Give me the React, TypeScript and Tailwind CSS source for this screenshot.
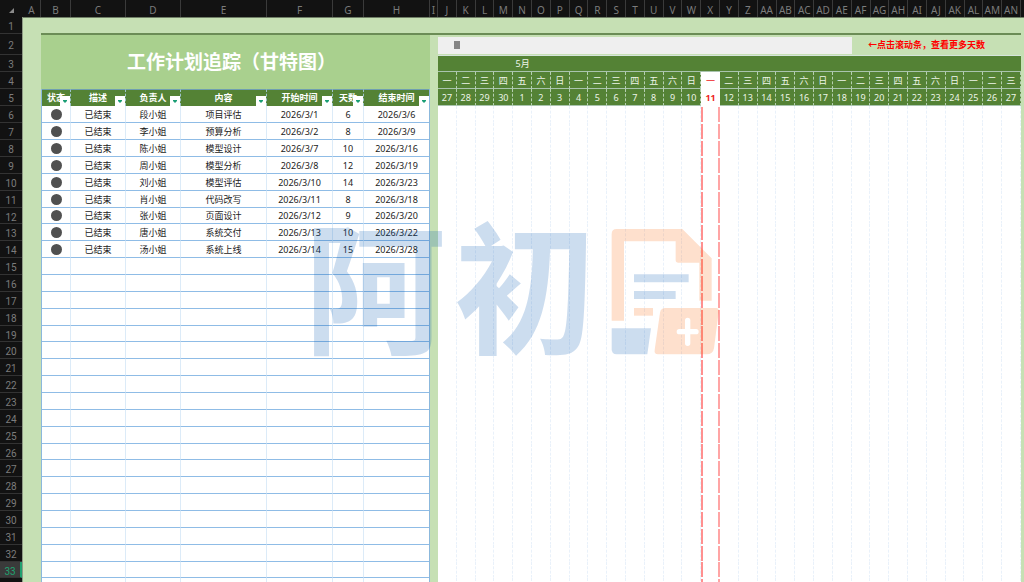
import { useState } from 'react';

interface Task {
  status: string;
  owner: string;
  content: string;
  start: string;
  days: number;
  end: string;
}

const tasks: Task[] = [
  { status: '已结束', owner: '段小姐', content: '项目评估', start: '2026/3/1', days: 6, end: '2026/3/6' },
  { status: '已结束', owner: '李小姐', content: '预算分析', start: '2026/3/2', days: 8, end: '2026/3/9' },
  { status: '已结束', owner: '陈小姐', content: '模型设计', start: '2026/3/7', days: 10, end: '2026/3/16' },
  { status: '已结束', owner: '周小姐', content: '模型分析', start: '2026/3/8', days: 12, end: '2026/3/19' },
  { status: '已结束', owner: '刘小姐', content: '模型评估', start: '2026/3/10', days: 14, end: '2026/3/23' },
  { status: '已结束', owner: '肖小姐', content: '代码改写', start: '2026/3/11', days: 8, end: '2026/3/18' },
  { status: '已结束', owner: '张小姐', content: '页面设计', start: '2026/3/12', days: 9, end: '2026/3/20' },
  { status: '已结束', owner: '唐小姐', content: '系统交付', start: '2026/3/13', days: 10, end: '2026/3/22' },
  { status: '已结束', owner: '汤小姐', content: '系统上线', start: '2026/3/14', days: 15, end: '2026/3/28' },
];

// Sheet columns of the task table (B to H), cell widths exclude the outer border
const taskColumns = [
  { letter: 'B', label: '状态', width: 'w-[30px]', cell: 'w-[29px]' },
  { letter: 'C', label: '描述', width: 'w-[55px]', cell: 'w-[55px]' },
  { letter: 'D', label: '负责人', width: 'w-[55px]', cell: 'w-[55px]' },
  { letter: 'E', label: '内容', width: 'w-[86px]', cell: 'w-[86px]' },
  { letter: 'F', label: '开始时间', width: 'w-[66px]', cell: 'w-[66px]' },
  { letter: 'G', label: '天数', width: 'w-[31px]', cell: 'w-[31px]' },
  { letter: 'H', label: '结束时间', width: 'w-[66px]', cell: 'w-[65px]' },
];

const ganttLetters = [
  ...'JKLMNOPQRSTUVWXYZ'.split(''),
  ...'ABCDEFGHIJKLMN'.split('').map((l) => `A${l}`),
];

const weekNames = ['一', '二', '三', '四', '五', '六', '日'];

// 31 days from Monday 27 April
const days = ganttLetters.map((letter, i) => ({
  letter,
  week: weekNames[i % 7],
  date: i < 4 ? 27 + i : i - 3,
  isToday: i === 14,
}));

const FIRST_ROW = 6;
const ACTIVE_ROW = 33;
const bodyRows = Array.from({ length: 30 }, (_, i) => i);

// Every seventh row is one pixel shorter
const rowHeight = (i: number) => (i % 7 === 6 ? 'h-4' : 'h-[17px]');

const gutterHeight = (row: number) => {
  if (row === 2) return 'h-[21px]';
  return row < FIRST_ROW ? 'h-[17px]' : rowHeight(row - FIRST_ROW);
};

function ColumnHeader() {
  const cell = 'flex items-center justify-center border-r border-[#3a3a3a] pt-0.5';
  return (
    <div className="flex h-[17px] shrink-0 bg-[#121212] font-['Noto_Sans',sans-serif] text-[10px] leading-none text-[#7c7c7c]">
      <div className="flex w-[23px] shrink-0 items-center justify-center pt-1">
        <svg width="5" height="5" viewBox="0 0 5 5" aria-hidden="true">
          <path d="M5 0V5H0Z" fill="#8a8a8a" />
        </svg>
      </div>
      <div className={`${cell} w-[18px] shrink-0`}>A</div>
      {taskColumns.map((c) => (
        <div key={c.letter} className={`${cell} ${c.width} shrink-0`}>{c.letter}</div>
      ))}
      <div className={`${cell} w-2 shrink-0`}>I</div>
      <div className="grid flex-1 grid-cols-[repeat(31,minmax(0,1fr))]">
        {ganttLetters.map((l) => (
          <div key={l} className={cell}>{l}</div>
        ))}
      </div>
      <div className="w-[3px] shrink-0" />
    </div>
  );
}

function RowGutter() {
  return (
    <div className="w-[23px] shrink-0 border-r border-[#8f9b86] bg-[#121212] font-[Roboto,'Noto_Sans',sans-serif] text-[10px] leading-none">
      {Array.from({ length: ACTIVE_ROW }, (_, i) => i + 1).map((row) => (
        <div
          key={row}
          className={`flex items-center justify-center border-b border-[#333333] pt-1 ${gutterHeight(row)} ${
            row === ACTIVE_ROW ? 'border-r-2 border-r-[#21a070] bg-[#3a3a3a] text-[#1fa271]' : 'text-[#7c7c7c]'
          }`}
        >
          {row}
        </div>
      ))}
    </div>
  );
}

function TaskTable() {
  return (
    <table className="w-full table-fixed border-separate border-spacing-0 border-x border-[#8bb8dc] bg-white text-center text-[9px] leading-none text-[#222222]">
      <thead>
        <tr className="h-[17px] bg-[#548235] text-white">
          {taskColumns.map((c) => (
            <th
              key={c.letter}
              className={`relative border-t border-r border-t-[#6f9fb0] border-r-[#9dc3c8] p-0 pb-0.5 font-bold [border-right-style:dashed] last:border-r-0 ${c.cell}`}
            >
              {c.label}
              <button
                type="button"
                aria-label={`筛选${c.label}`}
                className="absolute right-0 bottom-0 flex size-[10px] items-center justify-center bg-white"
              >
                <svg width="4" height="3" viewBox="0 0 4 3" aria-hidden="true">
                  <path d="M0 0H4V1L2 3L0 1Z" fill="#1a9e75" />
                </svg>
              </button>
            </th>
          ))}
        </tr>
      </thead>
      <tbody>
        {bodyRows.map((i) => {
          const task = tasks[i];
          const cells = task
            ? [task.status, task.owner, task.content, task.start, task.days, task.end]
            : ['', '', '', '', '', ''];
          return (
            <tr key={i} className={rowHeight(i)}>
              <td className="border-r border-b border-r-[#dcebf8] border-b-[#8fbce6] p-0">
                {task && <span className="mx-auto block size-[11px] rounded-full bg-[#505050]" />}
              </td>
              {cells.map((value, n) => (
                <td
                  key={n}
                  className="border-r border-b border-r-[#dcebf8] border-b-[#8fbce6] p-0 last:border-r-0"
                >
                  {value}
                </td>
              ))}
            </tr>
          );
        })}
      </tbody>
    </table>
  );
}

function GanttTable() {
  const head = 'border-b border-b-[#a9c4ae] p-0 font-normal';
  return (
    <table className="w-full table-fixed border-separate border-spacing-0 bg-white text-center text-[9px] leading-none text-[#eef5e8]">
      <thead className="bg-[#548235]">
        <tr className="h-[17px]">
          <th colSpan={4} className={`${head} border-t border-t-[#d5e5dc]`} />
          <th className={`${head} border-t border-t-[#d5e5dc]`}>5月</th>
          <th colSpan={26} className={`${head} border-t border-t-[#d5e5dc]`} />
        </tr>
        <tr className="h-[17px]">
          {days.map((d) => (
            <th
              key={d.letter}
              className={
                d.isToday
                  ? 'border-b border-white bg-white p-0 font-normal text-[#ee2222]'
                  : `${head} border-r border-r-[#b5cfb0] [border-right-style:dashed]`
              }
            >
              {d.week}
            </th>
          ))}
        </tr>
        <tr className="h-[17px]">
          {days.map((d) => (
            <th
              key={d.letter}
              className={
                d.isToday
                  ? 'bg-white p-0 font-bold text-[#ee2222]'
                  : `${head} border-r border-r-[#b5cfb0] [border-right-style:dashed]`
              }
            >
              {d.date}
            </th>
          ))}
        </tr>
      </thead>
      <tbody>
        {bodyRows.map((i) => (
          <tr key={i} className={rowHeight(i)}>
            {days.map((d) =>
              d.isToday ? (
                <td key={d.letter} className="border-b border-b-white p-0">
                  <div className="flex h-[15px] justify-between">
                    <span className="w-0.5 bg-[#ff9090]" />
                    <span className="w-0.5 bg-[#ffa5a5]" />
                  </div>
                </td>
              ) : (
                <td
                  key={d.letter}
                  className="border-r border-b border-r-[#e9f1fa] border-b-white p-0 [border-right-style:dashed]"
                />
              ),
            )}
          </tr>
        ))}
      </tbody>
    </table>
  );
}

function Watermark() {
  return (
    <div className="pointer-events-none absolute top-[227px] left-[304px] flex items-start" aria-hidden="true">
      <div className="flex w-[306px] gap-2 text-[142px] leading-[122px] font-bold text-[#0055af]/20">
        <span>阿</span>
        <span>初</span>
      </div>
      <svg width="110" height="130" viewBox="540 51 330 390">
        <g fill="#fa6405" fillOpacity="0.2">
          <path d="M545 72Q545 57 560 57H757L845 145V272H808V158H745Q737 158 737 150V94H582V332H545Z" />
          <path d="M612 294H669V317H612Z" />
          <path d="M706 294H858Q868 294 866 306L852 415Q849 433 830 433H684Q672 433 674 420L690 308Q692 294 706 294Z" />
        </g>
        <g fill="#0055af" fillOpacity="0.2">
          <path d="M612 193H776V217H612Z" />
          <path d="M612 243H737V267H612Z" />
          <path d="M545 355H663L652 433H560Q545 433 545 418Z" />
        </g>
        <path d="M748 365H798M773 331V400" stroke="#ffffff" strokeWidth="16" strokeLinecap="round" />
      </svg>
    </div>
  );
}

export default function App() {
  const [offset, setOffset] = useState(4);

  return (
    <div className="relative flex h-screen flex-col overflow-hidden bg-[#c6e0b4] font-['Noto_Sans','Noto_Sans_CJK_SC',sans-serif]">
      <ColumnHeader />
      <div className="flex min-h-0 flex-1">
        <RowGutter />
        <main className="min-w-0 flex-1 border-t border-[#6f7f66] pr-[3px] pl-[18px]">
          <div className="h-[15px]" />
          <div className="h-0.5 bg-[#6b8c56]" />
          <div className="flex">
            <section className="w-[389px] shrink-0">
              <h1 className="flex h-[54px] items-center justify-center bg-[#a9d08e] pr-2 text-[19px] leading-none font-bold text-white">
                工作计划追踪（甘特图）
              </h1>
              <TaskTable />
            </section>
            <div className="w-2 shrink-0" />
            <section className="min-w-0 flex-1">
              <div className="flex h-5 items-center">
                <input
                  type="range"
                  min={0}
                  max={100}
                  value={offset}
                  onChange={(e) => setOffset(Number(e.target.value))}
                  aria-label="滚动日期"
                  className="h-[17px] w-[71%] appearance-none bg-[#efefef] [&::-webkit-slider-thumb]:h-2 [&::-webkit-slider-thumb]:w-[6px] [&::-webkit-slider-thumb]:appearance-none [&::-webkit-slider-thumb]:bg-[#858585]"
                />
                <p className="flex-1 pr-5 pb-0.5 text-center text-[9px] leading-none font-bold whitespace-nowrap text-[#ff0000]">
                  ←点击滚动条，查看更多天数
                </p>
              </div>
              <GanttTable />
            </section>
          </div>
        </main>
      </div>
      <Watermark />
    </div>
  );
}
